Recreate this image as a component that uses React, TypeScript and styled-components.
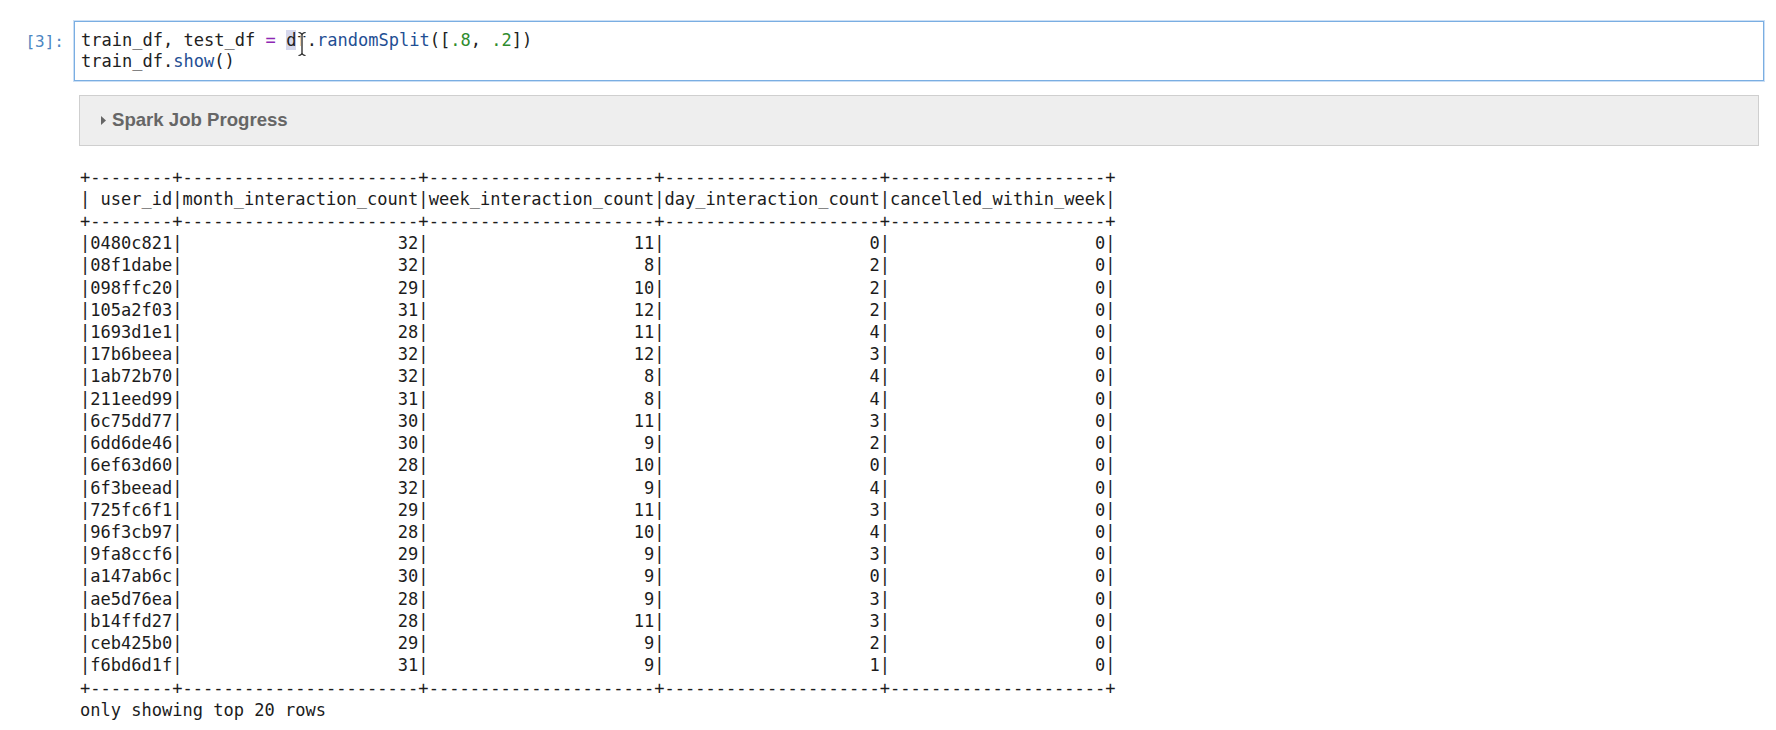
import React from "react";
import styled, { createGlobalStyle } from "styled-components";

const GlobalStyle = createGlobalStyle`
  html, body {
    margin: 0;
    padding: 0;
    background: #ffffff;
  }
  body {
    font-family: "DejaVu Sans Mono", monospace;
  }
`;

const Notebook = styled.div`
  width: 1776px;
  height: 730px;
  box-sizing: border-box;
  padding-top: 21px;
  overflow: hidden;
`;

const InputRow = styled.div`
  display: flex;
  align-items: flex-start;
`;

const Prompt = styled.div`
  width: 74px;
  flex: none;
  box-sizing: border-box;
  padding: 10px 10px 0 0;
  text-align: right;
  font-family: "DejaVu Sans Mono", monospace;
  font-size: 16px;
  line-height: 21px;
  color: #4d86c2;
`;

const Editor = styled.div`
  position: relative;
  flex: 1;
  margin-right: 12px;
  box-sizing: border-box;
  border: 1px solid #7aaee2;
  box-shadow: 0 0 0 1px rgba(140, 185, 232, 0.45);
  padding: 8px 0 8px 6px;
  background: #ffffff;
`;

const CodeLine = styled.div`
  font-family: "DejaVu Sans Mono", monospace;
  font-size: 17.05px;
  line-height: 21px;
  white-space: pre;
  color: #212121;
`;

const Tok = styled.span<{ $kind: "var" | "op" | "prop" | "num" | "punc" | "sel" }>`
  color: ${(p) =>
    p.$kind === "op"
      ? "#8e28b4"
      : p.$kind === "prop"
      ? "#1f4f94"
      : p.$kind === "num"
      ? "#2e8b2e"
      : "#212121"};
  background: ${(p) => (p.$kind === "sel" ? "#d6d8ec" : "transparent")};
`;

const IBeam = styled.svg`
  position: absolute;
  left: 222px;
  top: 9px;
  width: 10px;
  height: 26px;
  pointer-events: none;
`;

const OutputArea = styled.div`
  padding: 13.5px 17px 0 79px;
`;

const SparkPanel = styled.div`
  height: 51px;
  box-sizing: border-box;
  border: 1px solid #cfcfcf;
  background: #eeeeee;
  display: flex;
  align-items: center;
  padding-left: 21px;
  gap: 6px;
`;

const Caret = styled.svg`
  width: 5px;
  height: 9px;
  flex: none;
`;

const SparkTitle = styled.span`
  font-family: "Liberation Sans", Arial, sans-serif;
  font-weight: 700;
  font-size: 18.6px;
  color: #666666;
  padding-bottom: 1px;
`;

const Pre = styled.pre`
  margin: 20px 0 0 1px;
  font-family: "DejaVu Sans Mono", monospace;
  font-size: 17.05px;
  line-height: 22.22px;
  color: #1c1c1c;
  white-space: pre;
`;

type Row = [string, number, number, number, number];

const rows: Row[] = [
  ["0480c821", 32, 11, 0, 0],
  ["08f1dabe", 32, 8, 2, 0],
  ["098ffc20", 29, 10, 2, 0],
  ["105a2f03", 31, 12, 2, 0],
  ["1693d1e1", 28, 11, 4, 0],
  ["17b6beea", 32, 12, 3, 0],
  ["1ab72b70", 32, 8, 4, 0],
  ["211eed99", 31, 8, 4, 0],
  ["6c75dd77", 30, 11, 3, 0],
  ["6dd6de46", 30, 9, 2, 0],
  ["6ef63d60", 28, 10, 0, 0],
  ["6f3beead", 32, 9, 4, 0],
  ["725fc6f1", 29, 11, 3, 0],
  ["96f3cb97", 28, 10, 4, 0],
  ["9fa8ccf6", 29, 9, 3, 0],
  ["a147ab6c", 30, 9, 0, 0],
  ["ae5d76ea", 28, 9, 3, 0],
  ["b14ffd27", 28, 11, 3, 0],
  ["ceb425b0", 29, 9, 2, 0],
  ["f6bd6d1f", 31, 9, 1, 0],
];

const headers = [
  "user_id",
  "month_interaction_count",
  "week_interaction_count",
  "day_interaction_count",
  "cancelled_within_week",
];
const widths = [8, 23, 22, 21, 21];

const border = "+" + widths.map((w) => "-".repeat(w)).join("+") + "+";
const fmt = (cells: (string | number)[]) =>
  "|" + cells.map((c, i) => String(c).padStart(widths[i], " ")).join("|") + "|";

const tableText = [
  border,
  fmt(headers),
  border,
  ...rows.map((r) => fmt(r)),
  border,
  "only showing top 20 rows",
].join("\n");

const beamPath =
  "M1.5 1.5 C3.5 1.5 4.5 2.5 5 3.5 C5.5 2.5 6.5 1.5 8.5 1.5 M5 3.5 V22.5 M1.5 24.5 C3.5 24.5 4.5 23.5 5 22.5 C5.5 23.5 6.5 24.5 8.5 24.5";

export default function App() {
  return (
    <>
      <GlobalStyle />
      <Notebook>
        <InputRow>
          <Prompt>[3]:</Prompt>
          <Editor>
            <CodeLine>
              <Tok $kind="var">train_df</Tok>
              <Tok $kind="punc">, </Tok>
              <Tok $kind="var">test_df</Tok>
              <Tok $kind="punc"> </Tok>
              <Tok $kind="op">=</Tok>
              <Tok $kind="punc"> </Tok>
              <Tok $kind="sel">d</Tok>
              <Tok $kind="var">f</Tok>
              <Tok $kind="punc">.</Tok>
              <Tok $kind="prop">randomSplit</Tok>
              <Tok $kind="punc">([</Tok>
              <Tok $kind="num">.8</Tok>
              <Tok $kind="punc">, </Tok>
              <Tok $kind="num">.2</Tok>
              <Tok $kind="punc">])</Tok>
            </CodeLine>
            <CodeLine>
              <Tok $kind="var">train_df</Tok>
              <Tok $kind="punc">.</Tok>
              <Tok $kind="prop">show</Tok>
              <Tok $kind="punc">()</Tok>
            </CodeLine>
            <IBeam viewBox="0 0 10 26">
              <path d={beamPath} stroke="#ffffff" strokeWidth="3" fill="none" />
              <path d={beamPath} stroke="#111111" strokeWidth="1.2" fill="none" />
            </IBeam>
          </Editor>
        </InputRow>
        <OutputArea>
          <SparkPanel>
            <Caret viewBox="0 0 5 9">
              <path d="M0 0 L5 4.5 L0 9 Z" fill="#666666" />
            </Caret>
            <SparkTitle>Spark Job Progress</SparkTitle>
          </SparkPanel>
          <Pre>{tableText}</Pre>
        </OutputArea>
      </Notebook>
    </>
  );
}
